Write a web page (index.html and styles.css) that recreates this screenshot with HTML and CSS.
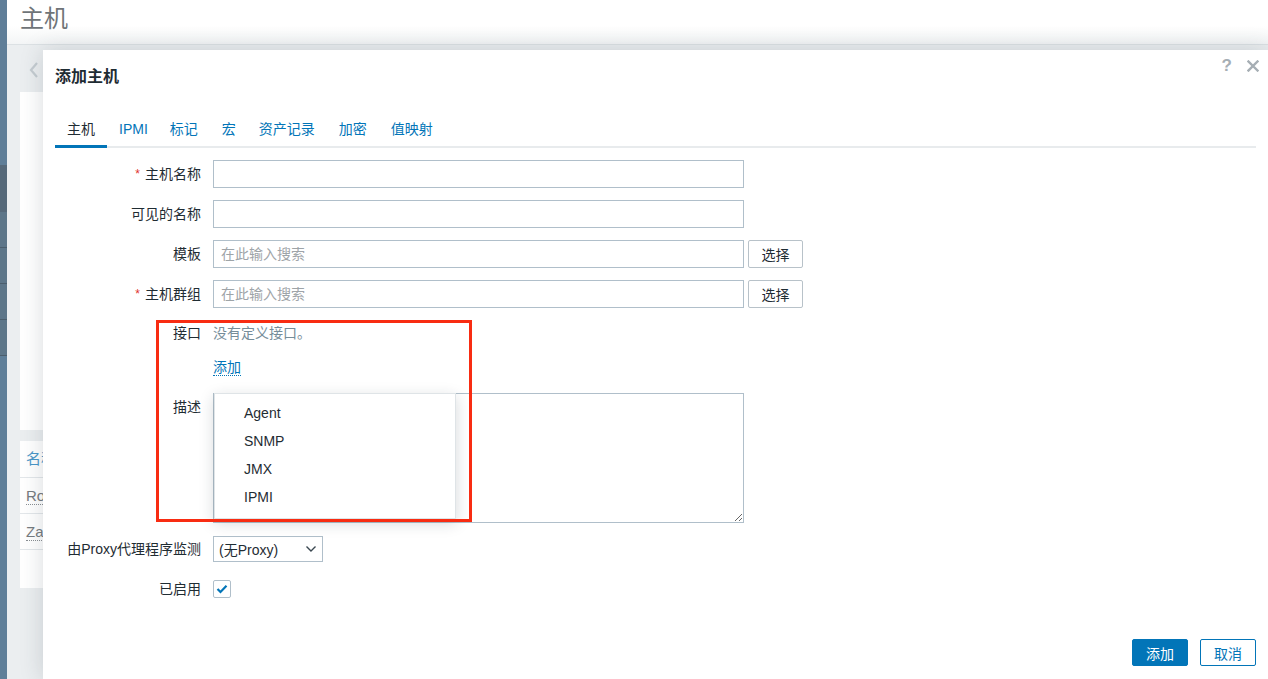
FILE: index.html
```html
<!DOCTYPE html>
<html lang="zh-CN">
<head>
<meta charset="utf-8">
<title>主机</title>
<link rel="stylesheet" href="styles.css">
</head>
<body>
<div class="app">
  <aside class="sidebar">
    <div class="sb-top"></div>
    <div class="sb-dark"></div>
    <div class="sb-row"></div>
    <div class="sb-row"></div>
    <div class="sb-row"></div>
    <div class="sb-row"></div>
    <div class="sb-rest"></div>
  </aside>
  <main class="page">
    <header class="page-head"><h1>主机</h1></header>
    <div class="page-body">
      <div class="back">
        <svg width="12" height="18" viewBox="0 0 12 18"><path d="M9 2 L3 9 L9 16" fill="none" stroke="#c5ccd1" stroke-width="2.2"/></svg>
      </div>
      <div class="panel filter"></div>
      <div class="panel list">
        <div class="list-row head">名称</div>
        <div class="list-row"><span class="lnk">Ro</span></div>
        <div class="list-row"><span class="lnk">Za</span></div>
        <div class="list-row empty"></div>
      </div>
    </div>
  </main>
</div>

<div class="modal">
  <div class="modal-head">
    <h2>添加主机</h2>
    <div class="modal-ctrls">
      <span class="q">?</span>
      <svg width="12" height="12" viewBox="0 0 12 12"><path d="M1.5 1.5 L10.5 10.5 M10.5 1.5 L1.5 10.5" stroke="#a6aeb4" stroke-width="2.4" stroke-linecap="square"/></svg>
    </div>
  </div>
  <ul class="tabs">
    <li class="active">主机</li>
    <li>IPMI</li>
    <li>标记</li>
    <li>宏</li>
    <li>资产记录</li>
    <li>加密</li>
    <li>值映射</li>
  </ul>
  <div class="form">
    <label class="lbl"><span class="req">*</span>主机名称</label>
    <div class="field"><input class="txt" type="text"></div>

    <label class="lbl">可见的名称</label>
    <div class="field"><input class="txt" type="text"></div>

    <label class="lbl">模板</label>
    <div class="field"><input class="txt" type="text" placeholder="在此输入搜索"><button class="btn-sel">选择</button></div>

    <label class="lbl"><span class="req">*</span>主机群组</label>
    <div class="field"><input class="txt" type="text" placeholder="在此输入搜索"><button class="btn-sel">选择</button></div>

    <label class="lbl lbl-if">接口</label>
    <div class="field-if">
      <div class="no-if">没有定义接口。</div>
      <div class="add-line"><span class="add-link">添加</span></div>
    </div>

    <label class="lbl">描述</label>
    <div class="field desc">
      <textarea class="area"></textarea>
      <ul class="menu">
        <li>Agent</li>
        <li>SNMP</li>
        <li>JMX</li>
        <li>IPMI</li>
      </ul>
    </div>

    <label class="lbl">由Proxy代理程序监测</label>
    <div class="field mid">
      <div class="select"><span>(无Proxy)</span>
        <svg width="12" height="8" viewBox="0 0 12 8"><path d="M1.5 1.5 L6 6 L10.5 1.5" fill="none" stroke="#3a4750" stroke-width="1.4"/></svg>
      </div>
    </div>

    <label class="lbl">已启用</label>
    <div class="field mid">
      <div class="check"><svg width="12" height="10" viewBox="0 0 12 10"><path d="M1.5 5 L4.5 8 L10.5 1.8" fill="none" stroke="#0275b8" stroke-width="2.2"/></svg></div>
    </div>
  </div>
  <div class="modal-foot">
    <button class="btn primary">添加</button>
    <button class="btn ghost">取消</button>
  </div>
  <div class="annot"></div>
</div>
</body>
</html>
```

FILE: styles.css
```css
* { box-sizing: border-box; }
html, body { margin: 0; padding: 0; }
body {
  width: 1268px;
  height: 679px;
  overflow: hidden;
  position: relative;
  font-family: "Liberation Sans", "Noto Sans CJK SC", sans-serif;
  font-size: 14px;
  color: #1f2c33;
  background: #ebeef0;
}
.app { display: flex; height: 679px; }

.sidebar { width: 7px; display: flex; flex-direction: column; background: #5f7e98; }
.sb-top { height: 165px; background: #5f7e98; }
.sb-dark { height: 47px; background: #56697a; }
.sb-row { height: 36px; background: #5d7689; border-bottom: 1px solid #4b5e6d; }
.sb-rest { flex: 1; background: #5f7f99; }

.page { flex: 1; display: flex; flex-direction: column; }
.page-head {
  height: 45px;
  background: linear-gradient(#ffffff 0, #ffffff 26px, #f3f5f6 44px);
  border-bottom: 1px solid #dce1e4;
  padding-left: 13px;
}
.page-head h1 {
  margin: 0;
  font-weight: normal;
  font-size: 24px;
  line-height: 38px;
  color: #6f7478;
}
.page-body { flex: 1; padding: 13px 0 0 13px; display: flex; flex-direction: column; }
.back { height: 24px; display: flex; align-items: center; padding-left: 8px; margin-bottom: 10px; }
.panel { background: #fff; width: 1200px; }
.filter { height: 338px; margin-bottom: 11px; }
.list-row {
  height: 36px;
  line-height: 36px;
  padding-left: 6px;
  border-bottom: 1px solid #e3e7ea;
  color: #767b7f;
  font-size: 15px;
}
.list-row.head { height: 37px; line-height: 36px; color: #4a97c9; }
.list-row.empty { border-bottom: none; height: 38px; }
.lnk { border-bottom: 1px dotted #8a8f93; }

/* modal */
.modal {
  position: absolute;
  left: 43px;
  top: 50px;
  width: 1225px;
  height: 629px;
  background: #fff;
  box-shadow: 0 0 22px rgba(40, 55, 65, 0.18);
  padding: 6px 9px 13px 12px;
  display: flex;
  flex-direction: column;
}
.modal-head { display: flex; justify-content: space-between; align-items: flex-start; }
.modal-head h2 {
  margin: 7px 0 0 0;
  font-size: 16px;
  line-height: 28px;
  font-weight: bold;
  color: #1f2c33;
}
.modal-ctrls { display: flex; align-items: center; gap: 15px; height: 20px; }
.q { font-weight: bold; font-size: 17px; color: #a6aeb4; line-height: 20px; }

.tabs {
  list-style: none;
  margin: 20px 3px 0 0;
  padding: 0;
  display: flex;
  border-bottom: 2px solid #e8ebed;
}
.tabs li {
  padding: 8px 12px 6px;
  line-height: 20px;
  color: #0275b8;
  border-bottom: 3px solid transparent;
  margin-bottom: -2px;
}
.tabs li.active { color: #1f2c33; border-bottom-color: #0275b8; }
.tabs li:nth-child(2) { padding-right: 11px; }
.tabs li:nth-child(3) { padding-left: 11px; }
.tabs li:nth-child(5) { padding-left: 11px; }

.form {
  margin-top: 12px;
  display: grid;
  grid-template-columns: 146px 1fr;
  column-gap: 12px;
  row-gap: 12px;
}
.lbl { text-align: right; line-height: 28px; white-space: nowrap; color: #1f2c33; }
.req { color: #e0322c; font-size: 12px; margin-right: 5px; vertical-align: 1px; }
.field { display: flex; gap: 4px; align-items: flex-start; }
.field.mid { align-items: center; height: 28px; }
.txt {
  width: 531px;
  height: 28px;
  border: 1px solid #b0bfca;
  border-radius: 0;
  padding: 0 7px;
  font: inherit;
  outline: none;
  background: #fff;
}
.txt::placeholder { color: #9ea4a8; }
.btn-sel {
  height: 28px;
  width: 55px;
  border: 1px solid #b8c2c9;
  border-radius: 2px;
  background: #fff;
  font: inherit;
  color: #1f2c33;
  padding: 0;
}
.lbl-if { line-height: 26px; }
.field-if { height: 61px; }
.no-if { line-height: 26px; color: #768d99; }
.add-line { margin-top: 8px; line-height: 26px; }
.add-link { color: #0275b8; border-bottom: 1px dotted #0275b8; }

.desc { position: relative; }
.area {
  width: 531px;
  height: 130px;
  border: 1px solid #b0bfca;
  border-radius: 0;
  margin: 0;
  font: inherit;
  outline: none;
  display: block;
}
.menu {
  position: absolute;
  left: 1px;
  top: 0;
  width: 242px;
  margin: 0;
  padding: 5px 0 7px;
  list-style: none;
  background: #fff;
  border: 1px solid #dfe4e7;
  box-shadow: 0 4px 14px rgba(30, 45, 55, 0.18);
}
.menu li { height: 28px; line-height: 28px; padding-left: 29px; color: #1f2c33; }

.select {
  width: 110px;
  height: 26px;
  border: 1px solid #b0bfca;
  display: flex;
  align-items: center;
  justify-content: space-between;
  padding: 0 5px 0 5px;
  color: #1f2c33;
}
.check {
  width: 18px;
  height: 18px;
  border: 1px solid #b0bfca;
  border-radius: 2px;
  display: flex;
  align-items: center;
  justify-content: center;
}

.modal-foot { margin-top: auto; display: flex; justify-content: flex-end; gap: 12px; padding-right: 3px; }
.btn {
  width: 56px;
  height: 27px;
  border-radius: 2px;
  font: inherit;
  padding: 0;
}
.btn.primary { background: #0275b8; border: 1px solid #0275b8; color: #fff; }
.btn.ghost { background: #fff; border: 1px solid #0275b8; color: #0275b8; }

.annot {
  position: absolute;
  left: 113px;
  top: 270px;
  width: 316px;
  height: 202px;
  border: 3px solid #f82c12;
  pointer-events: none;
}
```
